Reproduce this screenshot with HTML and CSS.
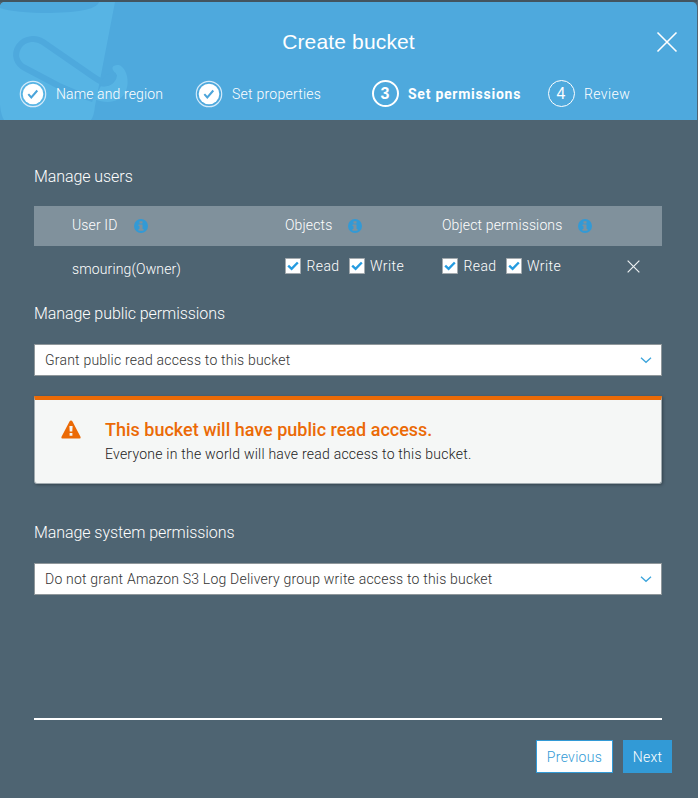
FILE: index.html
```html
<!DOCTYPE html>
<html lang="en">
<head>
<meta charset="utf-8">
<title>Create bucket</title>
<link rel="stylesheet" href="styles.css">
</head>
<body>
<svg class="defs" width="0" height="0" aria-hidden="true">
  <symbol id="info" viewBox="0 0 14 14"><circle cx="7" cy="7" r="7" fill="#329ad6"/><path d="M5.500 2.300h3v2.200h-3zM4.500 5.400h4v4.700h1v1.600h-5v-1.600h1V7h-1z" fill="#80919c"/></symbol>
  <symbol id="done" viewBox="0 0 28 28"><circle cx="14" cy="14" r="12.700" fill="none" stroke="#d3eafa" stroke-width="1.200"/><circle cx="14" cy="14" r="10.300" fill="#fff"/><path d="M9.300 14.200l3 3.300 6-7" fill="none" stroke="#4ba4da" stroke-width="2"/></symbol>
  <symbol id="check" viewBox="0 0 16 16"><path d="M.5.5h15v15H.5z" fill="#fff" stroke="#a4aaae"/><path d="M3.200 7.700l3.400 3.200 6.200-6.400" fill="none" stroke="#259be0" stroke-width="2.400"/></symbol>
  <symbol id="down" viewBox="0 0 12 8"><path d="M1 1.700l5 4.600 5-4.600" fill="none" stroke="#3da5dc" stroke-width="1.300"/></symbol>
</svg>
<div class="dialog">
  <header class="header">
    <svg class="bucket" width="130" height="118" viewBox="0 2 130 118" aria-hidden="true">
      <path d="M0 2H115L95 106Q94 116 91 120H4Q1 115 0 105Z" fill="#57b4e4"/>
      <path d="M0 2H99Q97 12 50 13Q15 13 0 8Z" fill="#4ea9dd"/>
      <path d="M104 83C99 81 92 76 85 71L43 42C36 37 25 38 19 46C13 55 17 64 25 68L59 86Q76 94 93 99" fill="none" stroke="#4ea9dd" stroke-width="6"/>
      <path d="M101 86C112 88 117 80 117 75C109 67 113 65 119 65C128 69 130 84 125 93C120 101 109 105 94 99Z" fill="#57b4e4"/>
      <path d="M100 86C108 88 117 83 116 73C111 71 104 76 102 80Z" fill="#4ea9dd"/>
    </svg>
    <h1 class="title">Create bucket</h1>
    <svg class="close" width="22" height="22" viewBox="0 0 22 22"><path d="M1.500 1.500l19 19M20.500 1.500l-19 19" stroke="#fff" stroke-width="1.600"/></svg>
    <nav class="steps">
      <div class="step s1"><svg width="28" height="28"><use href="#done"/></svg><span>Name and region</span></div>
      <div class="step s2"><svg width="28" height="28"><use href="#done"/></svg><span>Set properties</span></div>
      <div class="step s3"><b class="num">3</b><span>Set permissions</span></div>
      <div class="step s4"><b class="num">4</b><span>Review</span></div>
    </nav>
  </header>
  <main class="content">
    <h2 class="heading users">Manage users</h2>
    <div class="row head">
      <div class="cell"><span>User ID</span><svg width="14" height="14"><use href="#info"/></svg></div>
      <div class="cell"><span>Objects</span><svg width="14" height="14"><use href="#info"/></svg></div>
      <div class="cell"><span>Object permissions</span><svg width="14" height="14"><use href="#info"/></svg></div>
    </div>
    <div class="row user">
      <div class="cell owner">smouring(Owner)</div>
      <div class="cell checks"><svg width="16" height="16"><use href="#check"/></svg><span>Read</span><svg width="16" height="16"><use href="#check"/></svg><span>Write</span></div>
      <div class="cell checks"><svg width="16" height="16"><use href="#check"/></svg><span>Read</span><svg width="16" height="16"><use href="#check"/></svg><span>Write</span></div>
      <svg class="remove" width="13" height="13" viewBox="0 0 14 14"><path d="M.7.7l12.600 12.600M13.300.7L.7 13.300" stroke="#edf1f3" stroke-width="1.300"/></svg>
    </div>
    <h2 class="heading public">Manage public permissions</h2>
    <div class="select"><span>Grant public read access to this bucket</span><svg width="12" height="8"><use href="#down"/></svg></div>
    <section class="warning">
      <svg class="alert" width="20" height="19" viewBox="0 0 20 19"><path d="M10 .5Q11 .5 11.500 1.500L19.600 17Q20 18.500 18.500 18.500H1.500Q0 18.500.4 17L8.500 1.500Q9 .5 10 .5Z" fill="#eb6a06"/><path d="M8.400 6h3.200l-.3 5.500H8.700zM8.600 13h2.800v2.800H8.600z" fill="#f5f7f6"/></svg>
      <div><h3 class="warn-title">This bucket will have public read access.</h3><p class="warn-text">Everyone in the world will have read access to this bucket.</p></div>
    </section>
    <h2 class="heading system">Manage system permissions</h2>
    <div class="select"><span>Do not grant Amazon S3 Log Delivery group write access to this bucket</span><svg width="12" height="8"><use href="#down"/></svg></div>
  </main>
  <footer class="footer">
    <button class="btn previous">Previous</button>
    <button class="btn next">Next</button>
  </footer>
</div>
</body>
</html>
```
FILE: styles.css
```css
* { box-sizing: border-box; }
body { margin: 0; background: #4e6472; font: 300 14px/20px Roboto, "Liberation Sans", sans-serif; color: #fff; }
.defs { position: absolute; }
h1, h2, h3, p { margin: 0; font-weight: 300; }
svg { flex: none; display: block; }
span { white-space: nowrap; }
.dialog { width: 697px; height: 798px; border-top: 2px solid #43545f; display: flex; flex-direction: column; }
.header { position: relative; height: 118px; background: #4ea9dd; border-radius: 5px 5px 0 0; overflow: hidden; }
.bucket { position: absolute; left: 0; top: 0; }
.title { position: relative; padding-top: 25px; text-align: center; font: 400 21px/30px "Liberation Sans", sans-serif; letter-spacing: .15px; }
.close { position: absolute; right: 19px; top: 29px; }
.steps { position: relative; display: grid; grid-template-columns: 176px 177px 176px 1fr; padding: 22px 0 0 18.5px; }
.step { display: flex; align-items: center; gap: 9.5px; height: 29px; letter-spacing: .12px; }
.num { width: 27px; height: 27px; border: 2px solid #fff; border-radius: 50%; text-align: center; font: 500 16px/23px "Liberation Sans", sans-serif; letter-spacing: 0; }
.s2 { letter-spacing: .25px; }
.s3 { font-weight: 700; letter-spacing: .75px; }
.s4 { letter-spacing: .4px; }
.s3 .num { font-weight: 700; }
.s4 .num { border-width: 1px; line-height: 25px; font-weight: 400; }
.content { padding: 0 35px 0 34px; height: 596px; }
.heading { font-size: 16px; line-height: 20px; letter-spacing: -.07px; }
.users { padding-top: 47px; height: 86px; }
.row { display: grid; grid-template-columns: 213px 157px 1fr; padding-left: 38px; height: 40px; }
.cell { display: flex; align-items: center; letter-spacing: .13px; }
.head { background: #80919c; }
.head .cell { gap: 16px; }
.head span { padding-bottom: 2px; }
.user { position: relative; }
.owner { padding-top: 5px; }
.checks { letter-spacing: .4px; }
.checks span { margin: 0 9px 0 5.5px; }
.remove { position: absolute; right: 22px; top: 14px; }
.public { margin-top: 18px; height: 40px; }
.select { display: flex; align-items: center; justify-content: space-between; height: 32px; border: 1px solid #8f979b; background: #fff; color: #333; padding: 0 9px 0 10px; letter-spacing: .21px; }
.warning { margin-top: 20px; height: 88px; display: flex; gap: 24px; padding: 20px 26px 24px; border: 1px solid #a1abb0; border-top: 4px solid #eb6a06; border-radius: 0 0 3px 3px; background: #f5f7f6; color: #222; box-shadow: 1px 1px 3px #35454f; }
.warn-title { color: #eb6a06; font-size: 18px; line-height: 20px; font-weight: 500; }
.warn-text { line-height: 20px; margin-top: 4px; letter-spacing: .23px; }
.system { margin-top: 39px; height: 40px; }
.footer { margin: 2px 35px 0 34px; border-top: 2px solid #fff; padding-top: 20px; display: flex; justify-content: flex-end; gap: 10px; }
.btn { height: 33px; font: inherit; letter-spacing: .3px; border: 1px solid #329ad6; padding: 0; flex: none; }
.previous { width: 77px; background: #fff; color: #329ad6; }
.next { width: 49px; background: #329ad6; color: #fff; margin-right: -10px; }
```
